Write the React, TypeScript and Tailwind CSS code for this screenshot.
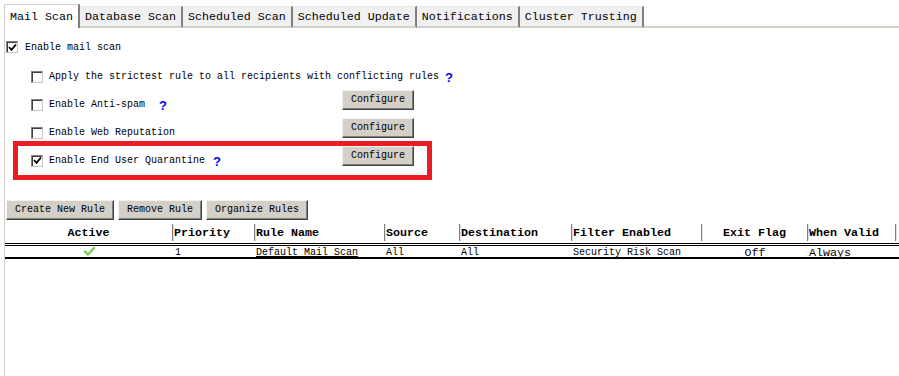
import React from "react";

function Box({ checked, className = "" }: { checked?: boolean; className?: string }) {
  return (
    <div
      className={`w-[12px] h-[12px] bg-white border border-t-[#808080] border-l-[#808080] border-r-[#c8c4bc] border-b-[#c8c4bc] shadow-[inset_1px_1px_#404040] flex items-center justify-center shrink-0 ${className}`}
    >
      {checked && (
        <svg width="9" height="9" viewBox="0 0 9 9">
          <path d="M1 4 L3.5 6.8 L8 1.5" stroke="#000" strokeWidth="1.8" fill="none" />
        </svg>
      )}
    </div>
  );
}

function Q({ className = "" }: { className?: string }) {
  return (
    <span className={`font-['Liberation_Sans',sans-serif] font-bold text-[13px] leading-[13px] text-[#0000ff] ${className}`}>?</span>
  );
}

function Btn({ children, className = "" }: { children: React.ReactNode; className?: string }) {
  return (
    <div
      className={`h-[20px] bg-[#d4d0c8] border border-t-[#f4f2ee] border-l-[#f4f2ee] border-r-[#404040] border-b-[#404040] shadow-[inset_-1px_-1px_#808080] flex items-center justify-center text-[10px] leading-[10px] text-black ${className}`}
    >
      {children}
    </div>
  );
}

const tabs = ["Database Scan", "Scheduled Scan", "Scheduled Update", "Notifications", "Cluster Trusting"];

const cols = [
  { name: "Active", w: "w-[168px]", center: true },
  { name: "Priority", w: "w-[82px]" },
  { name: "Rule Name", w: "w-[130px]" },
  { name: "Source", w: "w-[75px]" },
  { name: "Destination", w: "w-[112px]" },
  { name: "Filter Enabled", w: "w-[130px]" },
  { name: "Exit Flag", w: "w-[106px]", center: true },
  { name: "When Valid", w: "w-[88px]" },
];

export default function App() {
  return (
    <div className="w-[899px] h-[376px] bg-white overflow-hidden flex flex-col font-['Liberation_Mono',monospace] text-black relative">
      {/* Tabs */}
      <div className="flex items-end pl-[4px] pt-[4px] h-[28px] shrink-0">
        <div className="h-[24px] bg-white border-t border-l border-[#d4d0c8] border-r-2 border-r-[#808080] px-[5px] flex items-center text-[11.67px] leading-[12px]">
          Mail Scan
        </div>
        {tabs.map((t) => (
          <div
            key={t}
            className="h-[22px] bg-[#f0f0f0] border-t border-t-[#e8e8e8] border-b-2 border-b-[#d4d0c8] border-r-2 border-r-[#808080] px-[5px] flex items-center text-[11.67px] leading-[12px]"
          >
            {t}
          </div>
        ))}
        <div className="flex-1 h-[2px] bg-[#d4d0c8]" />
      </div>

      {/* Content */}
      <div className="flex-1 ml-[4px] border-l border-[#d4d0c8] flex flex-col pt-[6px] text-[10px] leading-[10px]">
        <div className="h-[28px] flex items-center pl-[1px]">
          <Box checked className="-mt-[2px]" />
          <span className="ml-[7px]">Enable mail scan</span>
        </div>
        <div className="mt-[1px] flex flex-col pl-[26px]">
          <div className="h-[28px] flex items-center">
            <Box className="-mt-[1px]" />
            <span className="ml-[6px]">Apply the strictest rule to all recipients with conflicting rules</span>
            <Q className="ml-[6px]" />
          </div>
          <div className="h-[28px] flex items-center">
            <div className="w-[311px] flex items-center">
              <Box className="-mt-[1px]" />
              <span className="ml-[6px]">Enable Anti-spam</span>
              <Q className="ml-[14px]" />
            </div>
            <Btn className="w-[72px] mb-[10px]">Configure</Btn>
          </div>
          <div className="h-[28px] flex items-center">
            <div className="w-[311px] flex items-center">
              <Box className="-mt-[1px]" />
              <span className="ml-[6px]">Enable Web Reputation</span>
            </div>
            <Btn className="w-[72px] mb-[10px]">Configure</Btn>
          </div>
          <div className="h-[28px] flex items-center relative">
            <div className="w-[311px] flex items-center">
              <Box checked className="-mt-[1px]" />
              <span className="ml-[6px]">Enable End User Quarantine</span>
              <Q className="ml-[8px]" />
            </div>
            <Btn className="w-[72px] mb-[10px]">Configure</Btn>
            {/* red annotation box */}
            <div className="absolute left-[-18px] top-[-6px] w-[419px] h-[39px] border-[5px] border-[#ed1c24] pointer-events-none" />
          </div>
        </div>

        {/* Rule buttons */}
        <div className="mt-[25px] flex gap-[4px] pl-[1px]">
          <Btn className="w-[108px]">Create New Rule</Btn>
          <Btn className="w-[84px]">Remove Rule</Btn>
          <Btn className="w-[102px]">Organize Rules</Btn>
        </div>

        {/* Table */}
        <div className="mt-[4px] flex flex-col">
          <div className="flex h-[19px] items-start">
            {cols.map((c) => (
              <div
                key={c.name}
                className={`${c.w} h-[17px] border-r border-r-[#808080] shadow-[1px_0_#e0e0e0] flex items-center ${c.center ? "justify-center" : "pl-[1px]"} font-bold text-[11.67px] leading-[12px]`}
              >
                {c.name}
              </div>
            ))}
          </div>
          <div className="h-[3px] border-t border-b border-black" />
          <div className="flex h-[11px] items-center">
            <div className="w-[168px] flex justify-center">
              <svg width="11" height="9" viewBox="0 0 11 9">
                <path d="M1 4.5 L4 7.5 L10 1" stroke="#5cc43a" strokeWidth="2.2" fill="none" strokeLinecap="round" strokeLinejoin="round" />
                <path d="M1.5 4.5 L4 7 L9.5 1.2" stroke="#a6e58c" strokeWidth="0.8" fill="none" />
              </svg>
            </div>
            <div className="w-[82px] pl-[2px] mt-[2px]">1</div>
            <div className="w-[130px] pl-[1px] underline mt-[2px]">Default Mail Scan</div>
            <div className="w-[75px] pl-[1px] mt-[2px]">All</div>
            <div className="w-[112px] pl-[1px] mt-[2px]">All</div>
            <div className="w-[130px] pl-[1px] mt-[2px]">Security Risk Scan</div>
            <div className="w-[106px] flex justify-center text-[11.67px] leading-[12px] mt-[3px]">Off</div>
            <div className="w-[88px] pl-[1px] text-[11.67px] leading-[12px] mt-[3px]">Always</div>
          </div>
          <div className="h-[2px] bg-black" />
        </div>
      </div>
    </div>
  );
}
